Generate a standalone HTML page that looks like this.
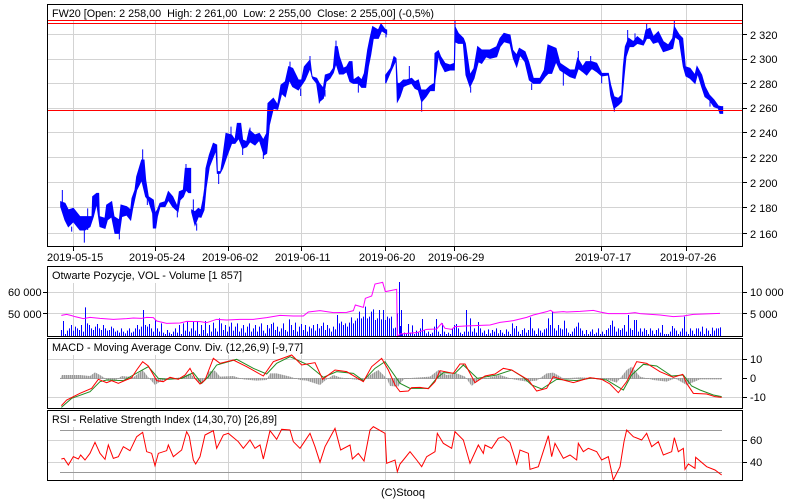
<!DOCTYPE html>
<html><head><meta charset="utf-8"><style>
html,body{margin:0;padding:0;background:#fff;width:800px;height:500px;overflow:hidden}
svg{display:block}
text{font-family:"Liberation Sans",Arial,sans-serif;font-size:11px;fill:#000}
</style></head><body>
<svg width="800" height="500" viewBox="0 0 800 500" xmlns="http://www.w3.org/2000/svg">
<defs>
<pattern id="p" width="6" height="10" patternUnits="userSpaceOnUse"><rect width="4" height="10" fill="#999"/><rect x="4" width="2" height="10" fill="#d0d0d0"/></pattern>
</defs>
<rect width="800" height="500" fill="#fff"/>
<g stroke="#d3d3d3" stroke-width="1" shape-rendering="crispEdges" fill="none">
<path d="M48 34.5H742M48 59.5H742M48 83.5H742M48 108.5H742M48 132.5H742M48 157.5H742M48 182.5H742M48 207.5H742M48 233.5H742"/>
<path d="M73.5 5V246M155.5 5V246M228.5 5V246M301.5 5V246M385.5 5V246M454.5 5V246M601.5 5V246M686.5 5V246"/>
<path d="M48 292.5H742M48 313.5H742M73.5 267V336M155.5 267V336M228.5 267V336M301.5 267V336M385.5 267V336M454.5 267V336M601.5 267V336M686.5 267V336"/>
<path d="M48 359.5H742M48 397.5H742M73.5 339V408M155.5 339V408M228.5 339V408M301.5 339V408M385.5 339V408M454.5 339V408M601.5 339V408M686.5 339V408"/>
<path d="M48 440.5H742M48 462.5H742M73.5 411V480M155.5 411V480M228.5 411V480M301.5 411V480M385.5 411V480M454.5 411V480M601.5 411V480M686.5 411V480"/>
</g>
<g fill="#fff">
<rect x="48" y="5" width="388" height="15"/>
<rect x="48" y="267" width="196" height="16"/>
<rect x="48" y="339" width="258" height="16"/>
<rect x="48" y="411" width="232" height="16"/>
</g>

<!-- main price: body envelopes and wicks -->
<g transform="scale(.3333333)" fill="#0000ff" stroke="#0000ff" stroke-width="3">
<polygon points="182,605 195,610 205,630 220,625 240,650 255,650 270,650 276,650 278,590 290,580 296,580 298,650 315,655 320,615 335,605 342,650 358,660 363,615 380,620 392,630 396,595 405,570 410,530 425,480 432,480 437,540 445,590 460,600 465,640 472,630 480,610 495,605 505,575 518,590 532,620 538,575 550,570 556,505 572,505 572,578 566,578 558,570 550,590 540,600 534,635 518,620 505,600 495,620 480,620 472,650 467,684 460,684 458,640 445,600 437,590 425,540 410,570 398,625 392,660 380,645 365,650 358,700 345,700 335,650 322,660 315,685 300,680 290,610 280,650 270,680 255,690 240,690 220,665 205,680 195,660 182,620"/>
<polygon points="575,630 585,635 595,625 603,630 610,595 614,565 618,505 628,465 640,430 650,435 652,515 662,515 668,475 678,400 695,405 705,420 712,370 722,370 728,420 740,425 748,390 765,405 778,400 790,420 800,400 804,310 820,295 833,315 843,255 856,245 866,200 878,205 895,240 905,240 913,200 930,180 936,230 950,235 958,250 970,265 976,225 990,220 1000,205 1006,140 1012,140 1018,170 1030,205 1040,200 1048,185 1056,185 1060,240 1075,230 1085,240 1093,220 1103,150 1110,115 1118,80 1135,90 1143,72 1155,88 1160,90 1160,102 1145,92 1135,115 1120,115 1112,165 1105,200 1097,262 1085,262 1075,250 1060,250 1050,245 1040,215 1030,222 1018,222 1008,190 1000,218 990,235 978,245 970,295 958,305 950,250 938,235 930,205 915,240 905,255 895,270 878,260 868,240 856,290 845,280 833,328 820,325 808,375 800,460 792,465 778,420 765,435 750,425 740,440 728,445 716,415 705,430 695,430 680,470 668,505 660,520 652,520 648,450 640,470 628,500 618,565 612,630 603,652 595,650 585,675 575,636"/>
<polygon points="1157,225 1172,205 1182,170 1188,175 1192,250 1200,250 1210,240 1220,240 1235,235 1245,245 1255,240 1263,270 1278,270 1290,258 1303,250 1305,160 1315,152 1322,170 1335,190 1350,195 1363,190 1365,80 1375,100 1390,115 1396,130 1410,225 1422,205 1433,140 1445,150 1458,150 1470,150 1490,140 1500,115 1512,100 1530,105 1538,150 1550,165 1558,145 1575,155 1586,185 1600,235 1620,235 1633,210 1644,135 1668,145 1680,190 1695,200 1710,210 1725,210 1733,175 1748,200 1758,185 1775,185 1790,190 1805,220 1825,220 1832,255 1842,290 1855,295 1865,285 1870,200 1876,140 1886,115 1900,125 1912,110 1930,125 1938,90 1950,85 1960,110 1975,95 1990,125 2005,135 2018,115 2023,80 2038,105 2048,115 2056,200 2070,205 2085,225 2091,200 2105,225 2115,260 2128,285 2142,300 2155,318 2163,320 2168,320 2168,340 2160,340 2155,325 2142,320 2128,300 2115,290 2105,260 2093,220 2085,250 2070,235 2058,228 2050,200 2038,120 2025,110 2018,145 2005,150 1990,155 1975,125 1960,130 1950,115 1940,115 1930,135 1912,130 1900,140 1888,140 1878,170 1872,230 1865,305 1855,315 1842,325 1832,285 1825,225 1805,228 1790,215 1775,205 1760,225 1748,215 1735,205 1725,235 1710,230 1695,220 1680,210 1668,185 1655,220 1645,220 1635,230 1620,250 1600,250 1588,240 1575,185 1560,165 1550,200 1540,175 1530,130 1512,125 1500,140 1490,170 1470,175 1458,170 1445,190 1435,185 1422,235 1410,260 1398,225 1390,130 1375,130 1365,125 1363,210 1350,210 1335,215 1322,190 1315,165 1305,240 1303,272 1290,272 1278,290 1265,305 1255,270 1245,265 1235,250 1220,255 1210,260 1200,290 1192,305 1188,180 1172,215 1157,250"/>
<path fill="none" d="M187 570V620M215 680V695M253 660V728M263 625V690M358 700V718M428 448V500M442 590V615M532 635V652M558 492V505M580 598V640M590 670V692M610 590V600M656 520V552M693 380V405M728 440V465M750 383V400M790 460V477M870 185V210M902 265V288M930 168V185M958 300V310M975 290V270M1008 122V145M1075 250V278M1158 100V112M1228 198V240M1265 305V335M1690 215V257M1595 250V270M1735 153V180M1772 168V190M1805 228V250M1843 325V335M1883 90V140M1905 100V125M1940 70V90M2023 62V85M1412 260V278M1365 62V80M2130 300V320M2158 325V335"/>
</g>

<!-- red levels -->
<g stroke="#ff0000" stroke-width="1" shape-rendering="crispEdges">
<path d="M48 20.5H742M48 23.5H742M48 110.5H742"/>
</g>

<!-- volume -->
<g transform="translate(61,260) scale(1,.3333333)">
<path style="fill:#0000ff" d="M0 229V210h1V229h1V183h1V229h1V222h1V229h1V212h1V229h1V205h1V229h1V195h1V229h1V212h1V229h1V200h1V229h1V205h1V229h1V210h1V229h1V195h1V229h1V215h1V229h1V142h1V229h1V190h1V229h1V195h1V229h1V205h1V229h1V210h1V229h1V200h1V229h1V192h1V229h1V205h1V229h1V210h1V229h1V195h1V229h1V205h1V229h1V212h1V229h1V210h1V229h1V200h1V229h1V205h1V229h1V215h1V229h1V212h1V229h1V218h1V229h1V205h1V229h1V215h1V229h1V220h1V229h1V212h1V229h1V205h1V229h1V218h1V229h1V215h1V229h1V205h1V229h1V195h1V229h1V208h1V229h1V200h1V229h1V150h1V229h1V195h1V229h1V200h1V229h1V192h1V229h1V205h1V229h1V215h1V229h1V180h1V229h1V205h1V229h1V215h1V229h1V190h1V229h1V218h1V229h1V222h1V229h1V210h1V229h1V218h1V229h1V222h1V229h1V215h1V229h1V205h1V229h1V218h1V229h1V195h1V229h1V222h1V229h1V190h1V229h1V212h1V229h1V185h1V229h1V215h1V229h1V205h1V229h1V185h1V229h1V212h1V229h1V183h1V229h1V222h1V229h1V195h1V229h1V210h1V229h1V183h1V229h1V220h1V229h1V195h1V229h1V215h1V229h1V188h1V229h1V205h1V229h1V215h1V229h1V175h1V229h1V190h1V229h1V210h1V229h1V195h1V229h1V215h1V229h1V200h1V229h1V188h1V229h1V212h1V229h1V200h1V229h1V190h1V229h1V215h1V229h1V205h1V229h1V195h1V229h1V218h1V229h1V200h1V229h1V190h1V229h1V215h1V229h1V205h1V229h1V195h1V229h1V215h1V229h1V200h1V229h1V190h1V229h1V212h1V229h1V220h1V229h1V195h1V229h1V205h1V229h1V192h1V229h1V188h1V229h1V210h1V229h1V200h1V229h1V215h1V229h1V205h1V229h1V190h1V229h1V210h1V229h1V215h1V229h1V178h1V229h1V195h1V229h1V210h1V229h1V188h1V229h1V215h1V229h1V200h1V229h1V192h1V229h1V210h1V229h1V195h1V229h1V215h1V229h1V200h1V229h1V205h1V229h1V195h1V229h1V212h1V229h1V192h1V229h1V205h1V229h1V198h1V229h1V188h1V229h1V210h1V229h1V195h1V229h1V205h1V229h1V215h1V229h1V200h1V229h1V208h1V229h1V165h1V229h1V190h1V229h1V185h1V229h1V195h1V229h1V190h1V229h1V200h1V229h1V188h1V229h1V172h1V229h1V190h1V229h1V182h1V229h1V175h1V229h1V155h1V229h1V175h1V229h1V170h1V229h1V140h1V229h1V175h1V229h1V170h1V229h1V155h1V229h1V148h1V229h1V180h1V229h1V175h1V229h1V150h1V229h1V178h1V229h1V150h1V229h1V180h1V229h1V170h1V229h1V175h1V229h1V170h1V229h1V205h1V229h1V203h1V229h1V160h1V229h1V66h1V229h1V150h1V229z"/>
</g>
<g transform="translate(400,260) scale(1,.3333333)">
<path style="fill:#0000ff" d="M0 229V198h1V229h1V222h1V229h1V218h1V229h1V222h1V229h1V192h1V229h1V218h1V229h1V196h1V229h1V222h1V229h1V212h1V229h1V218h1V229h1V205h1V229h1V177h1V229h1V210h1V229h1V220h1V229h1V215h1V229h1V222h1V229h1V218h1V229h1V200h1V229h1V177h1V229h1V215h1V229h1V222h1V229h1V190h1V229h1V215h1V229h1V222h1V229h1V218h1V229h1V222h1V229h1V205h1V229h1V195h1V229h1V192h1V229h1V205h1V229h1V218h1V229h1V222h1V229h1V215h1V229h1V150h1V229h1V215h1V229h1V175h1V229h1V215h1V229h1V205h1V229h1V218h1V229h1V186h1V229h1V205h1V229h1V218h1V229h1V212h1V229h1V222h1V229h1V208h1V229h1V220h1V229h1V210h1V229h1V215h1V229h1V205h1V229h1V220h1V229h1V210h1V229h1V218h1V229h1V222h1V229h1V208h1V229h1V215h1V229h1V222h1V229h1V190h1V229h1V205h1V229h1V198h1V229h1V215h1V229h1V222h1V229h1V210h1V229h1V205h1V229h1V218h1V229h1V210h1V229h1V172h1V229h1V205h1V229h1V212h1V229h1V222h1V229h1V205h1V229h1V212h1V229h1V218h1V229h1V208h1V229h1V205h1V229h1V175h1V229h1V195h1V229h1V155h1V229h1V205h1V229h1V212h1V229h1V195h1V229h1V205h1V229h1V208h1V229h1V182h1V229h1V205h1V229h1V218h1V229h1V222h1V229h1V215h1V229h1V205h1V229h1V200h1V229h1V188h1V229h1V205h1V229h1V212h1V229h1V222h1V229h1V210h1V229h1V222h1V229h1V215h1V229h1V208h1V229h1V222h1V229h1V218h1V229h1V205h1V229h1V222h1V229h1V215h1V229h1V222h1V229h1V210h1V229h1V205h1V229h1V195h1V229h1V182h1V229h1V200h1V229h1V215h1V229h1V205h1V229h1V210h1V229h1V205h1V229h1V195h1V229h1V215h1V229h1V165h1V229h1V205h1V229h1V210h1V229h1V180h1V229h1V180h1V229h1V215h1V229h1V205h1V229h1V215h1V229h1V205h1V229h1V210h1V229h1V222h1V229h1V205h1V229h1V212h1V229h1V222h1V229h1V210h1V229h1V205h1V229h1V218h1V229h1V195h1V229h1V222h1V229h1V222h1V229h1V222h1V229h1V215h1V229h1V198h1V229h1V205h1V229h1V212h1V229h1V222h1V229h1V215h1V229h1V205h1V229h1V170h1V229h1V215h1V229h1V222h1V229h1V205h1V229h1V212h1V229h1V222h1V229h1V205h1V229h1V205h1V229h1V215h1V229h1V200h1V229h1V222h1V229h1V205h1V229h1V212h1V229h1V222h1V229h1V203h1V229h1V212h1V229h1V205h1V229h1V205h1V229h1V202h1V229z"/>
</g>
<g transform="translate(0,260) scale(.3333333)" fill="none" stroke="#ff00ff" stroke-width="3">
<polyline points="184,166 200,163 215,167 225,170 250,176 270,172 300,175 340,178 380,176 400,174 425,175 440,172 460,173 470,183 500,190 540,189 560,184 600,185 620,188 650,178 680,180 720,178 760,178 800,173 840,166 880,168 910,168 925,156 960,152 1000,158 1040,157 1060,152 1066,135 1090,142 1096,115 1115,108 1125,72 1148,67 1156,95 1190,88 1192,230 1200,222 1250,218 1280,208 1310,207 1325,190 1335,205 1355,208 1365,200 1395,198 1470,195 1500,187 1540,182 1580,172 1600,165 1640,155 1652,151 1660,157 1690,155 1700,156 1740,154 1780,151 1800,156 1825,161 1880,161 1905,158 1920,161 1980,165 2020,170 2050,168 2080,163 2160,160"/>
</g>

<!-- MACD -->
<path d="M60 378.5H722" stroke="#999" stroke-width="1" shape-rendering="crispEdges"/>
<g transform="translate(0,260) scale(.3333333)">
<polygon fill="url(#p)" points="182,355 185,345 240,345 270,348 285,337 300,345 320,358 345,362 365,348 385,350 400,352 428,330 445,352 465,375 480,365 500,358 540,352 570,340 585,355 600,372 615,360 625,335 645,332 660,350 700,348 730,358 770,362 800,360 810,340 830,340 870,350 900,360 920,362 960,375 975,362 1000,345 1020,352 1060,358 1090,362 1110,345 1135,330 1160,355 1170,378 1195,380 1200,370 1215,355 1260,352 1290,350 1315,330 1340,345 1370,340 1395,350 1415,378 1435,360 1500,345 1540,358 1580,365 1610,362 1640,340 1660,338 1690,355 1740,352 1810,355 1850,368 1880,330 1895,320 1920,350 1960,360 2000,365 2025,355 2060,375 2100,358 2165,358 2165,355"/>
<g fill="none" stroke-width="3">
<polyline stroke="#228b22" points="184,442 215,415 270,395 300,365 320,360 370,362 400,345 445,320 475,355 500,358 545,355 580,338 605,370 625,350 650,315 710,298 760,325 800,342 830,310 870,290 925,315 970,352 1010,335 1060,340 1090,362 1125,325 1155,305 1200,370 1230,385 1285,385 1310,355 1330,338 1365,340 1390,315 1432,355 1490,345 1535,330 1570,352 1595,375 1625,387 1670,358 1730,362 1775,354 1820,360 1870,390 1895,345 1930,313 1970,318 2015,348 2050,345 2075,378 2100,390 2140,405 2165,410"/>
<polyline stroke="#ff0000" points="184,437 200,420 240,400 275,385 295,358 320,368 335,362 355,370 395,353 410,330 428,305 445,318 470,362 490,365 510,352 535,358 555,345 570,325 585,355 600,372 615,360 640,295 660,310 700,300 740,320 790,348 820,305 875,285 905,315 945,308 968,358 1005,330 1040,335 1090,365 1115,320 1145,295 1165,330 1185,375 1200,395 1225,393 1235,383 1260,382 1285,386 1305,365 1320,332 1360,340 1380,312 1395,312 1425,368 1455,348 1485,342 1510,325 1535,330 1585,360 1610,393 1640,385 1660,350 1690,360 1720,368 1770,353 1805,358 1830,372 1855,398 1880,365 1910,305 1940,310 1980,335 2020,352 2048,343 2060,370 2080,400 2120,402 2145,410 2165,412"/>
</g>
</g>

<!-- RSI -->
<path d="M60 430.5H722M60 472.5H722" stroke="#999" stroke-width="1" shape-rendering="crispEdges"/>
<g transform="translate(0,260) scale(.3333333)" fill="none" stroke="#ff0000" stroke-width="3">
<polyline points="184,597 192,595 205,615 220,590 235,597 242,585 255,600 270,580 285,547 300,580 315,598 325,555 340,595 355,590 370,560 390,572 410,530 428,517 440,575 455,580 465,617 475,580 500,572 505,555 520,590 545,570 560,515 568,530 580,600 587,612 600,590 615,525 640,512 650,565 670,525 685,520 715,545 730,565 750,540 765,565 780,555 790,597 810,512 830,538 845,508 870,510 880,545 900,565 930,520 945,560 960,607 975,560 1005,505 1022,570 1050,555 1057,597 1075,580 1092,603 1110,510 1120,500 1155,520 1160,610 1185,600 1192,635 1200,612 1210,600 1230,575 1250,600 1265,620 1280,590 1305,575 1312,520 1330,550 1355,565 1365,515 1390,540 1410,610 1435,555 1450,580 1455,555 1475,565 1495,535 1510,530 1530,548 1550,612 1560,570 1585,580 1590,628 1615,620 1645,527 1655,590 1665,550 1690,595 1710,585 1730,600 1735,550 1750,575 1765,565 1790,575 1805,600 1825,590 1840,660 1860,620 1872,545 1880,510 1900,530 1925,540 1940,520 1955,560 1975,545 1990,585 2015,575 2023,533 2035,575 2050,565 2055,628 2065,612 2085,625 2087,592 2120,620 2145,630 2165,645"/>
</g>

<!-- frames and ticks -->
<g fill="none" stroke="#000" stroke-width="1" shape-rendering="crispEdges">
<rect x="47.5" y="4.5" width="695" height="242"/>
<rect x="47.5" y="266.5" width="695" height="70"/>
<rect x="47.5" y="338.5" width="695" height="70"/>
<rect x="47.5" y="410.5" width="695" height="70"/>
<path d="M743 34.5H747M743 59.5H747M743 83.5H747M743 108.5H747M743 132.5H747M743 157.5H747M743 182.5H747M743 207.5H747M743 233.5H747"/>
<path d="M73.5 247V251M155.5 247V251M228.5 247V251M301.5 247V251M385.5 247V251M454.5 247V251M601.5 247V251M686.5 247V251"/>
<path d="M743 292.5H747M743 313.5H747M43 292.5H47M43 313.5H47M743 359.5H747M743 378.5H747M743 397.5H747M743 440.5H747M743 462.5H747"/>
</g>

<!-- text -->
<text x="52" y="17" textLength="382" lengthAdjust="spacingAndGlyphs" xml:space="preserve">FW20 [Open: 2 258,00  High: 2 261,00  Low: 2 255,00  Close: 2 255,00] (-0,5%)</text>
<text x="52" y="279" textLength="190" lengthAdjust="spacingAndGlyphs">Otwarte Pozycje, VOL - Volume [1 857]</text>
<text x="52" y="351" textLength="251" lengthAdjust="spacingAndGlyphs">MACD - Moving Average Conv. Div. (12,26,9) [-9,77]</text>
<text x="52" y="423" textLength="225" lengthAdjust="spacingAndGlyphs">RSI - Relative Strength Index (14,30,70) [26,89]</text>
<g text-anchor="start">
<text x="750" y="39">2 320</text><text x="750" y="63">2 300</text><text x="750" y="88">2 280</text><text x="750" y="112">2 260</text><text x="750" y="137">2 240</text><text x="750" y="162">2 220</text><text x="750" y="187">2 200</text><text x="750" y="212">2 180</text><text x="750" y="238">2 160</text>
<text x="47" y="261">2019-05-15</text><text x="129" y="261">2019-05-24</text><text x="202" y="261">2019-06-02</text><text x="275" y="261">2019-06-11</text><text x="359" y="261">2019-06-20</text><text x="428" y="261">2019-06-29</text><text x="575" y="261">2019-07-17</text><text x="660" y="261">2019-07-26</text>
<text x="8" y="296">60 000</text><text x="8" y="318">50 000</text>
<text x="750" y="296">10 000</text><text x="750" y="318">5 000</text>
<text x="750" y="363">10</text><text x="750" y="382">0</text><text x="750" y="401">-10</text>
<text x="750" y="444">60</text><text x="750" y="466">40</text>
<text x="381" y="496">(C)Stooq</text>
</g>
</svg>
</body></html>
